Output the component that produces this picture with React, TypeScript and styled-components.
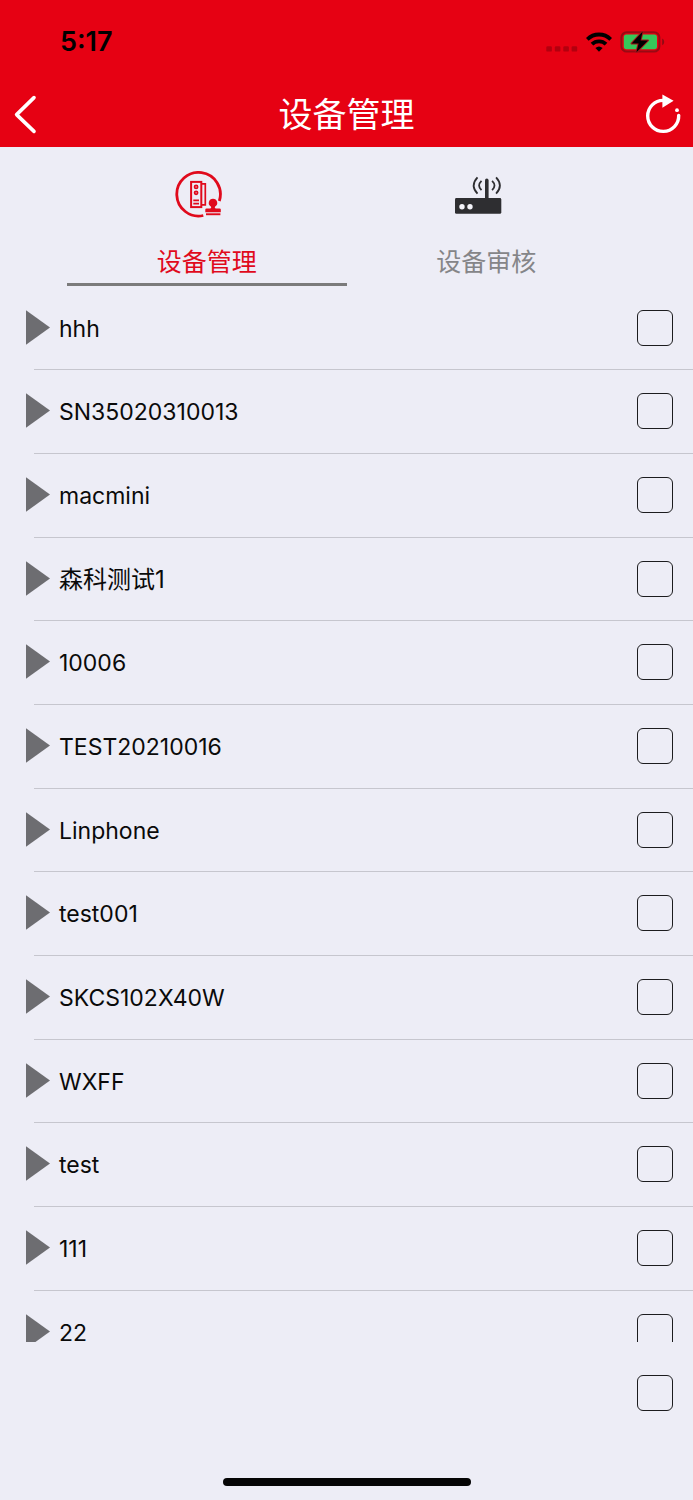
import React, { useState } from "react";
import styled, { createGlobalStyle } from "styled-components";

const GlobalStyle = createGlobalStyle`
  *, *::before, *::after { box-sizing: border-box; }
  body {
    margin: 0;
    background: #ededf6;
    font-family: Inter, "Noto Sans CJK SC", sans-serif;
    color: #0a0a0a;
  }
  button {
    margin: 0;
    padding: 0;
    border: 0;
    background: none;
    font: inherit;
    color: inherit;
    cursor: pointer;
  }
  svg { display: block; flex: none; }
`;

const Screen = styled.div`
  display: flex;
  flex-direction: column;
  height: 100vh;
`;

const Header = styled.header`
  flex: none;
  background: #e60113;
`;

const StatusBar = styled.div`
  display: flex;
  align-items: center;
  justify-content: space-between;
  height: 83px;
  padding: 0 28px 0 60px;
`;

const Clock = styled.time`
  font-size: 27px;
  font-weight: 600;
  line-height: 32px;
  color: #000;
`;

const StatusIcons = styled.div`
  display: flex;
  align-items: center;
  gap: 8px;
`;

const NavBar = styled.nav`
  display: grid;
  grid-template-columns: 64px 1fr 64px;
  align-items: center;
  height: 64px;
  color: #fff;
`;

const NavButton = styled.button<{ $end?: boolean }>`
  display: flex;
  align-items: center;
  justify-content: ${(p) => (p.$end ? "flex-end" : "flex-start")};
  height: 64px;
  padding: 0 12px;
`;

const Title = styled.h1`
  margin: 0;
  text-align: center;
  font-size: 34px;
  font-weight: 400;
  line-height: 64px;
`;

const Tabs = styled.div`
  flex: none;
  display: grid;
  grid-template-columns: 1fr 1fr;
  padding: 0 67px;
`;

const Tab = styled.button<{ $active: boolean }>`
  display: flex;
  flex-direction: column;
  align-items: center;
  gap: 24px;
  padding-top: 24px;
  border-bottom: 3px solid ${(p) => (p.$active ? "#7b7b7b" : "transparent")};
  font-size: 25px;
  line-height: 41px;
  color: ${(p) => (p.$active ? "#e00a1c" : "#858588")};
`;

const TabIcon = styled.span`
  padding-right: 16px;
`;

const DeviceList = styled.ul`
  flex: 1;
  min-height: 0;
  margin: 0;
  padding: 1px 0 0;
  overflow: hidden;
  list-style: none;
  display: grid;
  grid-auto-rows: 83px 84px 84px;
`;

const DeviceRow = styled.li`
  display: flex;
  align-items: center;
  padding: 0 20px 2px 26px;
  background: linear-gradient(#c6c6ce, #c6c6ce) 34px 100% / 100% 1px no-repeat;
`;

const DeviceButton = styled.button`
  flex: 1;
  display: flex;
  align-items: center;
  gap: 9px;
  text-align: left;
`;

const DeviceName = styled.span<{ $chinese: boolean }>`
  padding-top: 2px;
  font-size: ${(p) => (p.$chinese ? 24 : 23)}px;
  line-height: 20px;
`;

const CheckBox = styled.input`
  appearance: none;
  flex: none;
  width: 36px;
  height: 36px;
  margin: 0;
  border: 1px solid #1c1c1e;
  border-radius: 6px;
  cursor: pointer;
  &:checked { background: #6d6d71; }
`;

const Footer = styled.footer`
  flex: none;
  display: flex;
  flex-direction: column;
  justify-content: space-between;
  height: 158px;
  padding: 33px 20px 14px;
`;

const SelectAll = styled.div`
  display: flex;
  justify-content: flex-end;
`;

const HomeIndicator = styled.div`
  align-self: center;
  width: 248px;
  height: 8px;
  border-radius: 4px;
  background: #050505;
`;

const SignalIcon = () => (
  <svg width="32" height="22" viewBox="0 0 32 22" fill="#000" fillOpacity="0.22" aria-hidden="true">
    {[0, 8.5, 17, 25.3].map((x) => (
      <rect key={x} x={x + 0.3} y="15.2" width="5.6" height="5.4" rx="1.2" />
    ))}
  </svg>
);

const WifiIcon = () => (
  <svg width="26" height="20" viewBox="0 0 26 20" fill="none" stroke="#000" strokeWidth="3.8" aria-hidden="true">
    <path d="M1.3 7.4A16.4 16.4 0 0 1 24.7 7.4" />
    <path d="M6 12.2A9.9 9.9 0 0 1 20 12.2" />
    <path d="M9.4 16.1Q13 12.9 16.6 16.1L13 19.7Z" fill="#000" stroke="none" />
  </svg>
);

const BatteryIcon = () => (
  <svg width="45" height="22" viewBox="0 0 45 22" aria-hidden="true">
    <rect x="1.4" y="1.2" width="38" height="19.4" rx="5.4" fill="none" stroke="#980a14" strokeWidth="2" />
    <path d="M42.2 7.6Q44.2 8.6 44.2 10.9T42.2 14.2Z" fill="#8e0b14" />
    <rect x="3.8" y="3.6" width="33.2" height="14.6" rx="2.6" fill="#35c759" />
    <path
      d="M22.6 0.6L11.6 12.4H18.6L16.4 21.2L28 9.4H20.6Z"
      fill="#000"
      stroke="#a5121a"
      strokeWidth="2"
      strokeLinejoin="round"
      paintOrder="stroke"
    />
  </svg>
);

const BackIcon = () => (
  <svg width="26" height="40" viewBox="0 0 26 40" fill="none" stroke="currentColor" strokeWidth="3.6" strokeLinecap="round" strokeLinejoin="round" aria-hidden="true">
    <path d="M22 2.6L4.6 19.6L22 36.4" />
  </svg>
);

const RefreshIcon = () => (
  <svg width="36" height="42" viewBox="0 2 36 42" aria-hidden="true">
    <path d="M18.4 8.4A15.5 15.5 0 1 0 33.7 23.4" fill="none" stroke="currentColor" strokeWidth="3.4" strokeLinecap="round" />
    <path d="M17.4 2.4V15.8L28.6 8.8Z" fill="currentColor" />
    <circle cx="32" cy="18.2" r="1.9" fill="currentColor" />
  </svg>
);

const DeviceIcon = () => (
  <svg width="47" height="47" viewBox="0 0 47 47" fill="none" stroke="#e00a1c" aria-hidden="true">
    <path d="M44.3 30A21.8 21.8 0 1 0 28.3 44.5" strokeWidth="2.8" />
    <rect x="16.1" y="10.9" width="10.2" height="25.2" strokeWidth="2" />
    <path d="M27 12.8H30.3V33.8H27" strokeWidth="1.7" />
    <circle cx="21.1" cy="15.9" r="1.5" strokeWidth="1.8" />
    <circle cx="21.1" cy="21.8" r="1.5" strokeWidth="1.8" />
    <path d="M18.3 29.4H24M18.3 32.6H24" strokeWidth="1.6" />
    <g fill="#e00a1c" stroke="none">
      <path d="M38 27.8A4.2 4.2 0 0 1 40.2 35.6C39.5 36.4 39.8 37.4 41 37.4H44.5Q45.8 37.4 45.8 38.6V41.2H30.3V38.6Q30.3 37.4 31.6 37.4H35C36.2 37.4 36.5 36.4 35.8 35.6A4.2 4.2 0 0 1 38 27.8Z" />
      <rect x="31" y="42.3" width="14.4" height="1.9" />
    </g>
  </svg>
);

const RouterIcon = () => (
  <svg width="47" height="47" viewBox="0.7 -5 47 47" fill="#2e2e31" aria-hidden="true">
    <rect x="0.7" y="22" width="46.3" height="15.8" rx="1.4" />
    <path d="M30.7 23V4.4A1.8 1.8 0 0 1 34.3 4.4V23Z" />
    <g fill="#f4f4fa">
      <circle cx="7.7" cy="30.7" r="2.7" />
      <circle cx="15.7" cy="30.7" r="2.7" />
    </g>
    <g fill="none" stroke="#2e2e31" strokeWidth="1.8">
      <path d="M23.2 1.3Q15.6 9.5 23.2 17.7M27.2 4.8Q22.4 9.5 27.2 14.2" />
      <path d="M41.8 1.3Q49.4 9.5 41.8 17.7M37.8 4.8Q42.6 9.5 37.8 14.2" />
    </g>
  </svg>
);

const ExpandIcon = () => (
  <svg width="24" height="36" viewBox="0 0 24 36" fill="#6d6d71" aria-hidden="true">
    <path d="M0 0.2L24 17.5L0 34.8Z" />
  </svg>
);

const devices = [
  "hhh",
  "SN35020310013",
  "macmini",
  "森科测试1",
  "10006",
  "TEST20210016",
  "Linphone",
  "test001",
  "SKCS102X40W",
  "WXFF",
  "test",
  "111",
  "22",
];

const tabs = [
  { label: "设备管理", Icon: DeviceIcon },
  { label: "设备审核", Icon: RouterIcon },
];

export default function App() {
  const [tab, setTab] = useState(0);
  const [selected, setSelected] = useState<string[]>([]);

  const toggle = (name: string) =>
    setSelected((list) => (list.includes(name) ? list.filter((n) => n !== name) : [...list, name]));

  const allSelected = selected.length === devices.length;

  return (
    <>
      <GlobalStyle />
      <Screen>
        <Header>
          <StatusBar>
            <Clock>5:17</Clock>
            <StatusIcons>
              <SignalIcon />
              <WifiIcon />
              <BatteryIcon />
            </StatusIcons>
          </StatusBar>
          <NavBar>
            <NavButton aria-label="返回">
              <BackIcon />
            </NavButton>
            <Title>设备管理</Title>
            <NavButton $end aria-label="刷新">
              <RefreshIcon />
            </NavButton>
          </NavBar>
        </Header>
        <Tabs role="tablist">
          {tabs.map(({ label, Icon }, i) => (
            <Tab key={label} role="tab" aria-selected={tab === i} $active={tab === i} onClick={() => setTab(i)}>
              <TabIcon>
                <Icon />
              </TabIcon>
              {label}
            </Tab>
          ))}
        </Tabs>
        <DeviceList>
          {devices.map((name) => (
            <DeviceRow key={name}>
              <DeviceButton aria-expanded={false}>
                <ExpandIcon />
                <DeviceName $chinese={/[\u4e00-\u9fff]/.test(name)}>{name}</DeviceName>
              </DeviceButton>
              <CheckBox
                type="checkbox"
                aria-label={name}
                checked={selected.includes(name)}
                onChange={() => toggle(name)}
              />
            </DeviceRow>
          ))}
        </DeviceList>
        <Footer>
          <SelectAll>
            <CheckBox
              type="checkbox"
              aria-label="全选"
              checked={allSelected}
              onChange={() => setSelected(allSelected ? [] : devices)}
            />
          </SelectAll>
          <HomeIndicator />
        </Footer>
      </Screen>
    </>
  );
}
